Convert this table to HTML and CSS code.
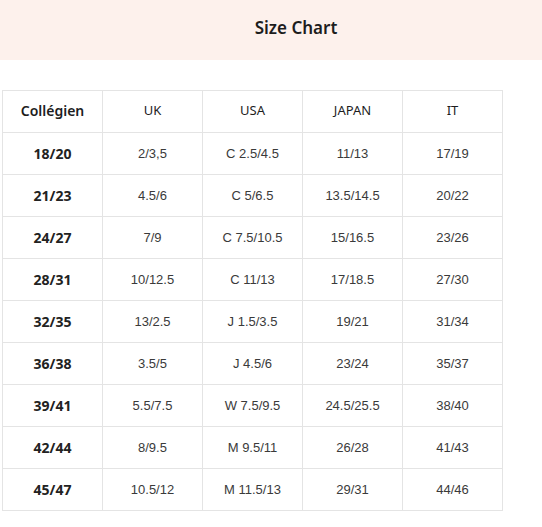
FILE: index.html
```html
<!DOCTYPE html>
<html>
<head>
<meta charset="utf-8">
<link rel="stylesheet" href="styles.css">
</head>
<body>
<div class="header"><h1 class="title">Size Chart</h1></div>
<div class="content">
<table class="chart">
<thead>
<tr><th class="first">Collégien</th><th>UK</th><th>USA</th><th>JAPAN</th><th>IT</th></tr>
</thead>
<tbody>
<tr><td class="first">18/20</td><td>2/3,5</td><td>C 2.5/4.5</td><td>11/13</td><td>17/19</td></tr>
<tr><td class="first">21/23</td><td>4.5/6</td><td>C 5/6.5</td><td>13.5/14.5</td><td>20/22</td></tr>
<tr><td class="first">24/27</td><td>7/9</td><td>C 7.5/10.5</td><td>15/16.5</td><td>23/26</td></tr>
<tr><td class="first">28/31</td><td>10/12.5</td><td>C 11/13</td><td>17/18.5</td><td>27/30</td></tr>
<tr><td class="first">32/35</td><td>13/2.5</td><td>J 1.5/3.5</td><td>19/21</td><td>31/34</td></tr>
<tr><td class="first">36/38</td><td>3.5/5</td><td>J 4.5/6</td><td>23/24</td><td>35/37</td></tr>
<tr><td class="first">39/41</td><td>5.5/7.5</td><td>W 7.5/9.5</td><td>24.5/25.5</td><td>38/40</td></tr>
<tr><td class="first">42/44</td><td>8/9.5</td><td>M 9.5/11</td><td>26/28</td><td>41/43</td></tr>
<tr><td class="first">45/47</td><td>10.5/12</td><td>M 11.5/13</td><td>29/31</td><td>44/46</td></tr>
</tbody>
</table>
</div>
</body>
</html>
```
FILE: styles.css
```css
html, body {
  margin: 0;
  padding: 0;
  background: #fff;
}
body {
  font-family: "Noto Sans", "Open Sans", sans-serif;
  color: #222;
}
.header {
  background: #fdf1ec;
  height: 60px;
  display: flex;
  align-items: center;
  justify-content: center;
  padding-left: 50px;
  box-sizing: border-box;
  padding-bottom: 6px;
}
.title {
  margin: 0;
  font-size: 17px;
  font-weight: 600;
  color: #1d1d1d;
}
.content {
  padding: 30px 0 0 2px;
}
.chart {
  border-collapse: collapse;
  table-layout: fixed;
  width: 501px;
}
.chart th, .chart td {
  border: 1px solid #e4e4e4;
  height: 40px;
  padding: 0 0 1px;
  text-align: center;
  vertical-align: middle;
}
.chart th {
  font-size: 13px;
  font-weight: 400;
  color: #1d1d1d;
  height: 38px;
  padding-bottom: 3px;
}
.chart th.first {
  font-size: 14px;
  font-weight: 600;
}
.chart td {
  font-family: "Liberation Sans", "DejaVu Sans", sans-serif;
  font-size: 13px;
  color: #3a3a3a;
}
.chart td.first {
  font-family: "Noto Sans", "Open Sans", sans-serif;
  font-size: 14px;
  font-weight: 700;
  color: #222;
}
```
